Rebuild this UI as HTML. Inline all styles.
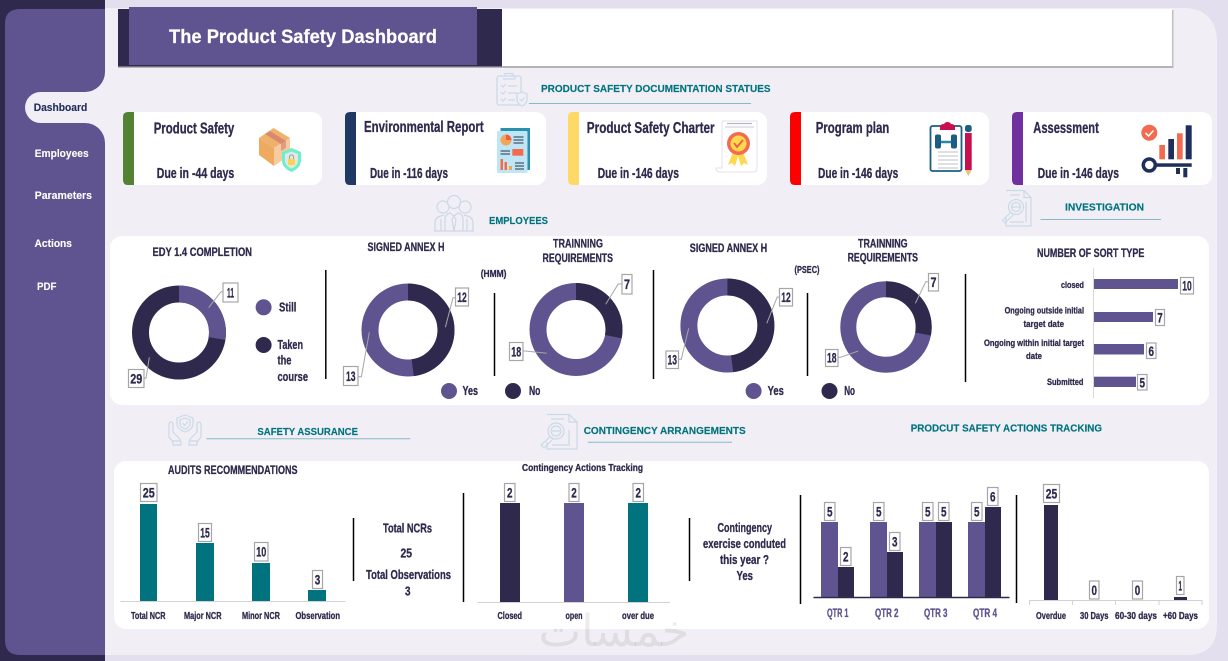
<!DOCTYPE html>
<html lang="en"><head><meta charset="utf-8"><title>The Product Safety Dashboard</title>
<style>
html,body{margin:0;padding:0;background:#e3dfee;width:1228px;height:661px;overflow:hidden}
svg{display:block}
text{font-family:"Liberation Sans",sans-serif;font-weight:700;fill:#2f2a4d;stroke:#2f2a4d;stroke-width:.3px}
.s{fill:#fff;stroke:#fff;stroke-width:.1px;font-size:11px}
.h{fill:#00737f;stroke:#00737f;stroke-width:.15px;font-size:10px}
.c{font-size:15.5px}
.d{font-size:14.5px}
.t{font-size:11.5px}
.l{font-size:10.5px}
.n{font-size:14px;text-anchor:middle}
.m{font-size:12.5px}
.q{font-size:11.5px;fill:#5f5490;stroke:#5f5490}
.o{font-size:9.5px}
.b{fill:#fff;stroke:#a6a6a6;stroke-width:1.200}
.ld{fill:none;stroke:#a6a6a6;stroke-width:1}
.k{stroke:#000;stroke-width:1.5}
.i{fill:none;stroke:#c9dae7;stroke-width:1.200}
.u{stroke:#86bac6;stroke-width:1}
</style></head><body>
<svg width="1228" height="661" viewBox="0 0 1228 661" xmlns="http://www.w3.org/2000/svg">
<rect width="1228" height="661" fill="#e3dfee"/>
<path d="M105 8H1182Q1217 8 1217 43V625Q1217 655 1187 655H105Z" fill="#f1eff5"/>
<rect width="105" height="661" fill="#2f2a4d"/>
<path d="M20 9H105V655H20Q5 655 5 640V24Q5 9 20 9Z" fill="#5f5490"/>
<path d="M105 72A20 20 0 0 1 85 92H40.500A15.500 15.500 0 0 0 40.500 123H85A20 20 0 0 1 105 143Z" fill="#f1eff5"/>
<text class="s" x="33.700" y="111" textLength="53.600" lengthAdjust="spacingAndGlyphs" style="fill:#1f2a5c;stroke:#1f2a5c">Dashboard</text>
<text class="s" x="34.700" y="157" textLength="54" lengthAdjust="spacingAndGlyphs">Employees</text>
<text class="s" x="34.700" y="199" textLength="57.300" lengthAdjust="spacingAndGlyphs">Parameters</text>
<text class="s" x="34.500" y="247" textLength="37.500" lengthAdjust="spacingAndGlyphs">Actions</text>
<text class="s" x="37" y="290" textLength="19.500" lengthAdjust="spacingAndGlyphs">PDF</text>

<!-- header -->
<rect x="118" y="66" width="1055.500" height="2" fill="#b4b4b4"/>
<rect x="1172" y="10" width="1.500" height="57" fill="#c0c0c0"/>
<rect x="118" y="9" width="384" height="57.500" fill="#2f2a4d"/>
<rect x="502" y="9" width="670" height="57" fill="#fff"/>
<rect x="129" y="7" width="348" height="58" fill="#5f5490"/>
<text x="169" y="43" style="fill:#fff;stroke:#fff;stroke-width:.2px;font-size:19px" textLength="268" lengthAdjust="spacingAndGlyphs">The Product Safety Dashboard</text>

<!-- section headings -->
<g class="i"><rect x="497" y="76" width="24" height="29" rx="2"/><path d="M505 76V73.500H513V76M503 79H515V76M501 85l2 2 3-3M508 86H517M501 92l2 2 3-3M508 93H517M501 99l2 2 3-3M508 100H515"/><path d="M522 92l5 2v5q0 5-5 7-5-2-5-7v-5z" fill="#f1eff5"/><path d="M519.500 99l2 2 3-3.500"/></g>
<text class="h" x="541" y="92" textLength="229.600" lengthAdjust="spacingAndGlyphs">PRODUCT SAFETY DOCUMENTATION STATUES</text>
<line class="u" x1="529" y1="103.500" x2="751" y2="103.500"/>

<g class="i"><circle cx="454" cy="202" r="6.500"/><circle cx="443" cy="207" r="6"/><circle cx="465" cy="207" r="6"/><path d="M435 231V223q0-6 6-7l3-1M473 231V223q0-6-6-7l-3-1M445 231V219q0-5 5-6l4 3 4-3q5 1 5 6V231M434 231H474M454 216l-2 4 2 11 2-11zM441 219v12M467 219v12"/></g>
<text class="h" x="489" y="224" textLength="59" lengthAdjust="spacingAndGlyphs">EMPLOYEES</text>

<g class="i"><path d="M1006 190.500H1024L1031 197.500V226H1006V218M1024 190.500V197.500H1031M1010 195H1020M1026 202V222M1010 222H1024"/><circle cx="1016" cy="207" r="7.500"/><circle cx="1016" cy="207" r="4.500"/><path d="M1010.500 212.500L1002.500 220.500 1005 223 1013 215M1012 207H1020"/></g>
<text class="h" x="1065" y="210.300" textLength="79" lengthAdjust="spacingAndGlyphs">INVESTIGATION</text>
<line class="u" x1="1040.500" y1="219.500" x2="1161" y2="219.500"/>

<g class="i"><path d="M185 415l8 3v6q0 5-8 8-8-3-8-8v-6z"/><path d="M185 418l5 2v4q0 3-5 5-5-2-5-5v-4z"/><path d="M182.500 423l2 2.500 3.500-4"/>
<path d="M169 425q0-3 2-3t2 3v7l5 5q3 3 3 6v2h-8v-3l-4-5z"/><path d="M201 425q0-3-2-3t-2 3v7l-5 5q-3 3-3 6v2h8v-3l4-5z"/><path d="M173 441h8M197 441h-8"/></g>
<text class="h" x="257.400" y="435" textLength="100.600" lengthAdjust="spacingAndGlyphs">SAFETY ASSURANCE</text>
<line class="u" x1="206.400" y1="438.700" x2="410.200" y2="438.700"/>

<g class="i"><path d="M547 414.500H569L577 422V449H547V442M569 414.500V422H577M551 419H564M569 430V444M552 445H570"/><circle cx="556" cy="431" r="8"/><circle cx="556" cy="431" r="5"/><path d="M550 437L541 445 544 448 553 439M552 431H560"/></g>
<text class="h" x="583.700" y="434" textLength="162" lengthAdjust="spacingAndGlyphs">CONTINGENCY ARRANGEMENTS</text>
<line class="u" x1="587.800" y1="442.300" x2="732" y2="442.300"/>
<text class="h" x="910.700" y="431.300" textLength="191.300" lengthAdjust="spacingAndGlyphs">PRODCUT SAFETY ACTIONS TRACKING</text>

<!-- cards -->
<g fill="#fff"><rect x="123" y="112" width="199" height="73" rx="10"/><rect x="345" y="112" width="201" height="73" rx="10"/><rect x="568" y="112" width="199" height="73" rx="10"/><rect x="790" y="112" width="199" height="73" rx="10"/><rect x="1012" y="112" width="200" height="73" rx="10"/></g>
<path d="M134 112H128Q123 112 123 117V180Q123 185 128 185H134Z" fill="#548235"/>
<path d="M356 112H350Q345 112 345 117V180Q345 185 350 185H356Z" fill="#1f3864"/>
<path d="M579 112H573Q568 112 568 117V180Q568 185 573 185H579Z" fill="#ffd966"/>
<path d="M801 112H795Q790 112 790 117V180Q790 185 795 185H801Z" fill="#ff0000"/>
<path d="M1023 112H1017Q1012 112 1012 117V180Q1012 185 1017 185H1023Z" fill="#7030a0"/>

<text class="c" x="153.700" y="133.500" textLength="80.600" lengthAdjust="spacingAndGlyphs">Product Safety</text>
<text class="d" x="156.700" y="178" textLength="77.600" lengthAdjust="spacingAndGlyphs">Due in -44 days</text>
<text class="c" x="364" y="132" textLength="119.700" lengthAdjust="spacingAndGlyphs">Environmental Report</text>
<text class="d" x="370" y="178" textLength="78" lengthAdjust="spacingAndGlyphs">Due in -116 days</text>
<text class="c" x="586.800" y="133" textLength="127.800" lengthAdjust="spacingAndGlyphs">Product Safety Charter</text>
<text class="d" x="597.700" y="178" textLength="81.300" lengthAdjust="spacingAndGlyphs">Due in -146 days</text>
<text class="c" x="815.700" y="133" textLength="73.600" lengthAdjust="spacingAndGlyphs">Program plan</text>
<text class="d" x="818" y="178" textLength="80.300" lengthAdjust="spacingAndGlyphs">Due in -146 days</text>
<text class="c" x="1033.300" y="133" textLength="65.500" lengthAdjust="spacingAndGlyphs">Assessment</text>
<text class="d" x="1037.800" y="178" textLength="81.200" lengthAdjust="spacingAndGlyphs">Due in -146 days</text>

<!-- box icon -->
<polygon points="273.500,128 290,138 274,148 259,138" fill="#efb26c"/>
<polygon points="259,138 274,148 274,166 259,155" fill="#eeab60"/>
<polygon points="290,138 274,148 274,166 290,155" fill="#f6cba0"/>
<polygon points="265,134 281,144 286,141 270,131" fill="#d98a6e"/>
<polygon points="281,144 286,141 286,148 281,151" fill="#e39a80"/>
<path d="M291.500 148l9.500 4v8q0 8-9.500 12-9.500-4-9.500-12v-8z" fill="#6fefc8"/>
<path d="M291.500 151.500l6.500 2.500v6q0 6-6.500 8.500-6.500-2.500-6.500-8.500v-6z" fill="#dfe7e8"/>
<rect x="288" y="159" width="7" height="6" fill="#ffd24d"/><path d="M289.500 159v-2q0-2 2-2t2 2v2" fill="none" stroke="#9aa3a8" stroke-width="1"/>
<!-- report icon -->
<rect x="500.500" y="128" width="29.500" height="42" fill="#2b8fb0"/>
<rect x="497" y="131" width="30.500" height="42" rx="1" fill="#bfe6f5"/>
<circle cx="506" cy="140" r="5.500" fill="#f5a55a"/><path d="M506 140V134.500A5.500 5.500 0 0 1 511.500 140Z" fill="#ef5d47"/>
<path d="M513.500 137H523.500M513.500 140H523.500M513.500 143H523.500M500.500 151H510M500.500 154H510M515 163H524M515 166H524M515 169H524" stroke="#47566b" stroke-width="1.200"/>
<rect x="512.300" y="149" width="11" height="6.700" fill="#f26b50"/>
<rect x="500.500" y="159" width="2.500" height="11" fill="#f26b50"/><rect x="504.500" y="162" width="2.500" height="8" fill="#f26b50"/><rect x="509" y="166" width="3" height="4" fill="#f5a55a"/>
<!-- certificate icon -->
<path d="M722 121H757V168Q757 172 753 172H720Q716 172 716 168H722Z" fill="#fff" stroke="#e2e2ee" stroke-width="1"/>
<path d="M727 123.500H752" stroke="#b6b6c4" stroke-width="1.300"/><path d="M725 127H754" stroke="#c9c9d6" stroke-width="1"/>
<path d="M733 152l-5 13 4-2 3 3 3-10 3 10 3-3 4 2-5-13z" fill="#ffd84d"/>
<circle cx="738.500" cy="143.500" r="11.500" fill="#f26b50"/><circle cx="738.500" cy="143.500" r="8" fill="#ffd84d"/>
<path d="M734 143l3 4 6-7" fill="none" stroke="#ef5d47" stroke-width="1.800"/>
<!-- clipboard dumbbell icon -->
<rect x="930.500" y="126" width="31" height="45" rx="2" fill="#fff" stroke="#1b5e80" stroke-width="1.800"/>
<path d="M940 130V126Q941 124 944 124 945 122 947.500 122 950 122 951 124 954 124 955 126V130Z" fill="#c8104e"/>
<path d="M936 142H956" stroke="#2c86a6" stroke-width="2.500"/>
<rect x="935" y="134.500" width="6" height="14" rx="2" fill="#1b5e80"/><rect x="951" y="134.500" width="6" height="14" rx="2" fill="#1b5e80"/>
<path d="M938 152H958M938 156H958M938 160H958M938 164H958M938 168H958" stroke="#c9ced6" stroke-width="1.300"/>
<rect x="965" y="125" width="6.700" height="7" rx="2.500" fill="#1b5e80"/>
<rect x="965" y="133" width="6.700" height="37" fill="#c8104e"/><polygon points="965,170 971.700,170 968.300,176" fill="#e8c080"/>
<!-- key chart icon -->
<circle cx="1149.300" cy="132.700" r="8" fill="#f26b50"/><path d="M1145.500 133l3 3 5-5.500" fill="none" stroke="#fff" stroke-width="1.600"/>
<rect x="1159.300" y="145" width="5.700" height="14.300" fill="#f26b50"/><rect x="1168.300" y="139" width="5.700" height="20.300" fill="#1f2f5c"/>
<rect x="1177" y="133.300" width="5.700" height="26" fill="#f26b50"/><rect x="1185.700" y="125.300" width="6" height="34" fill="#1f2f5c"/>
<circle cx="1149.300" cy="165" r="6" fill="#fff" stroke="#1f2f5c" stroke-width="3.500"/>
<rect x="1156.500" y="163.300" width="35.200" height="3.500" fill="#1f2f5c"/><rect x="1176" y="168" width="4" height="6" fill="#1f2f5c"/><rect x="1183.300" y="168" width="4" height="9.300" fill="#1f2f5c"/>

<!-- middle panel -->
<rect x="110" y="236" width="1099" height="169" rx="12" fill="#fff"/>
<text class="t" x="152.500" y="256" textLength="99.500" lengthAdjust="spacingAndGlyphs">EDY 1.4  COMPLETION</text>
<text class="t" x="367.500" y="251" textLength="77" lengthAdjust="spacingAndGlyphs">SIGNED ANNEX H</text>
<text class="t" x="553" y="247.500" textLength="50" lengthAdjust="spacingAndGlyphs">TRAINNING</text>
<text class="t" x="542.500" y="262" textLength="70.500" lengthAdjust="spacingAndGlyphs">REQUIREMENTS</text>
<text x="480.700" y="277" style="font-size:10px" textLength="25.700" lengthAdjust="spacingAndGlyphs">(HMM)</text>
<text class="t" x="689.800" y="252" textLength="77.400" lengthAdjust="spacingAndGlyphs">SIGNED ANNEX H</text>
<text class="t" x="858" y="247.500" textLength="49.600" lengthAdjust="spacingAndGlyphs">TRAINNING</text>
<text class="t" x="847.600" y="261.500" textLength="70.400" lengthAdjust="spacingAndGlyphs">REQUIREMENTS</text>
<text x="794.500" y="273" style="font-size:10px" textLength="25" lengthAdjust="spacingAndGlyphs">(PSEC)</text>
<text class="t" x="1037" y="257" textLength="107.300" lengthAdjust="spacingAndGlyphs">NUMBER OF SORT TYPE</text>

<g class="k"><line x1="325.800" y1="270" x2="325.800" y2="379"/><line x1="494.500" y1="293" x2="494.500" y2="376"/><line x1="653.500" y1="270" x2="653.500" y2="379"/><line x1="807.500" y1="293" x2="807.500" y2="376"/><line x1="965.500" y1="274" x2="965.500" y2="382"/></g>

<!-- donuts -->
<g fill="none" stroke-width="17">
<circle cx="179" cy="332.500" r="38.500" stroke="#2f2a4d"/>
<circle cx="179" cy="332.500" r="38.500" stroke="#5f5490" pathLength="100" stroke-dasharray="27.500 72.500" transform="rotate(-90 179 332.500)"/>
<circle cx="408" cy="330" r="38" stroke="#5f5490"/>
<circle cx="408" cy="330" r="38" stroke="#2f2a4d" pathLength="100" stroke-dasharray="48 52" transform="rotate(-90 408 330)"/>
<circle cx="576" cy="329.500" r="38" stroke="#5f5490"/>
<circle cx="576" cy="329.500" r="38" stroke="#2f2a4d" pathLength="100" stroke-dasharray="28 72" transform="rotate(-90 576 329.500)"/>
<circle cx="727.400" cy="325.500" r="38.500" stroke="#5f5490"/>
<circle cx="727.400" cy="325.500" r="38.500" stroke="#2f2a4d" pathLength="100" stroke-dasharray="48 52" transform="rotate(-90 727.400 325.500)"/>
<circle cx="886" cy="327" r="37.700" stroke="#5f5490" stroke-width="16"/>
<circle cx="886" cy="327" r="37.700" stroke="#2f2a4d" stroke-width="16" pathLength="100" stroke-dasharray="28 72" transform="rotate(-90 886 327)"/>
</g>
<!-- leaders -->
<g class="ld">
<path d="M208.600 307.700L221 291.700H223"/><path d="M149.300 357.300L146 378.300H144"/>
<path d="M445.400 327.300L453 297.700H455"/><path d="M369.300 332.300L361.400 376.700H358"/>
<path d="M605.700 304.300L618.200 284H622"/><path d="M546.800 353.300L525.400 351H523"/>
<path d="M766.800 323.300L777.200 297H779.400"/><path d="M688.700 328.300L681.300 359.300H678.400"/>
<path d="M915.400 303.300L925.700 281.700H928.300"/><path d="M858.300 351L840.600 357.300H838"/>
</g>
<!-- donut label boxes -->
<rect class="b" x="223" y="283" width="15" height="19"/><text class="n" x="230.500" y="297.500" textLength="7" lengthAdjust="spacingAndGlyphs">11</text>
<rect class="b" x="128.500" y="369.500" width="15.500" height="18"/><text class="n" x="136.200" y="383.500" textLength="12" lengthAdjust="spacingAndGlyphs">29</text>
<rect class="b" x="455.500" y="288" width="13" height="18"/><text class="n" x="462" y="302" textLength="9.500" lengthAdjust="spacingAndGlyphs">12</text>
<rect class="b" x="343.500" y="366.500" width="14.500" height="19"/><text class="n" x="350.700" y="381" textLength="9.500" lengthAdjust="spacingAndGlyphs">13</text>
<rect class="b" x="622" y="274.500" width="10" height="19.500"/><text class="n" x="627" y="289" textLength="6" lengthAdjust="spacingAndGlyphs">7</text>
<rect class="b" x="509.500" y="342.500" width="13.500" height="18"/><text class="n" x="516.200" y="356.500" textLength="10" lengthAdjust="spacingAndGlyphs">18</text>
<rect class="b" x="779.500" y="288.500" width="13" height="17.500"/><text class="n" x="786" y="302" textLength="9.500" lengthAdjust="spacingAndGlyphs">12</text>
<rect class="b" x="666" y="351" width="12.500" height="17.500"/><text class="n" x="672.200" y="364.500" textLength="9.500" lengthAdjust="spacingAndGlyphs">13</text>
<rect class="b" x="928.500" y="273.500" width="10" height="17.500"/><text class="n" x="933.500" y="287" textLength="6" lengthAdjust="spacingAndGlyphs">7</text>
<rect class="b" x="825.500" y="349.500" width="12.500" height="17"/><text class="n" x="831.700" y="362.500" textLength="9.500" lengthAdjust="spacingAndGlyphs">18</text>

<!-- legends -->
<circle cx="263.600" cy="307.300" r="8" fill="#5f5490"/><circle cx="263.600" cy="345" r="8" fill="#2f2a4d"/>
<text class="m" x="279" y="311.500" textLength="17.400" lengthAdjust="spacingAndGlyphs">Still</text>
<text class="m" x="277.500" y="349" textLength="25.500" lengthAdjust="spacingAndGlyphs">Taken</text>
<text class="m" x="277.500" y="364.500" textLength="14" lengthAdjust="spacingAndGlyphs">the</text>
<text class="m" x="277.500" y="381" textLength="30.500" lengthAdjust="spacingAndGlyphs">course</text>
<circle cx="449" cy="391" r="8" fill="#5f5490"/><circle cx="513" cy="391" r="8" fill="#2f2a4d"/>
<text class="m" x="462.500" y="395" textLength="15.500" lengthAdjust="spacingAndGlyphs">Yes</text>
<text class="m" x="529" y="395" textLength="11.400" lengthAdjust="spacingAndGlyphs">No</text>
<circle cx="753.600" cy="391" r="8" fill="#5f5490"/><circle cx="829.500" cy="391" r="8" fill="#2f2a4d"/>
<text class="m" x="767.600" y="395" textLength="16.200" lengthAdjust="spacingAndGlyphs">Yes</text>
<text class="m" x="844.200" y="395" textLength="10.800" lengthAdjust="spacingAndGlyphs">No</text>

<!-- hbar -->
<line x1="1093.500" y1="268" x2="1093.500" y2="398" stroke="#d9d9d9"/>
<g fill="#5f5490"><rect x="1094" y="279" width="84" height="10"/><rect x="1094" y="312" width="59" height="10"/><rect x="1094" y="344" width="50" height="10.500"/><rect x="1094" y="376.700" width="42" height="10.300"/></g>
<rect class="b" x="1180.500" y="277.500" width="13" height="16.500"/><text class="n" x="1187" y="290.500" textLength="9.500" lengthAdjust="spacingAndGlyphs">10</text>
<rect class="b" x="1155.500" y="309.500" width="9" height="16"/><text class="n" x="1160" y="322.500" textLength="5.500" lengthAdjust="spacingAndGlyphs">7</text>
<rect class="b" x="1146.500" y="343" width="9.500" height="15.500"/><text class="n" x="1151.200" y="356" textLength="5.500" lengthAdjust="spacingAndGlyphs">6</text>
<rect class="b" x="1137.500" y="374.500" width="9.500" height="15.500"/><text class="n" x="1142.200" y="387.500" textLength="5.500" lengthAdjust="spacingAndGlyphs">5</text>
<text class="o" x="1061" y="288" textLength="23" lengthAdjust="spacingAndGlyphs">closed</text>
<text class="o" x="1004.600" y="313.700" textLength="79.400" lengthAdjust="spacingAndGlyphs">Ongoing outside initial</text>
<text class="o" x="1023.500" y="327" textLength="40.500" lengthAdjust="spacingAndGlyphs">target date</text>
<text class="o" x="984" y="346" textLength="100" lengthAdjust="spacingAndGlyphs">Ongoing within initial target</text>
<text class="o" x="1026" y="359" textLength="16" lengthAdjust="spacingAndGlyphs">date</text>
<text class="o" x="1047" y="385" textLength="36.500" lengthAdjust="spacingAndGlyphs">Submitted</text>

<!-- bottom panel -->
<rect x="114" y="461" width="1095" height="168" rx="12" fill="#fff"/>
<text class="t" x="168" y="474" textLength="129.500" lengthAdjust="spacingAndGlyphs">AUDITS RECOMMENDATIONS</text>
<text x="522" y="471" style="font-size:10.500px" textLength="121" lengthAdjust="spacingAndGlyphs">Contingency Actions Tracking</text>
<g class="k"><line x1="353.500" y1="518" x2="353.500" y2="581"/><line x1="463.500" y1="493" x2="463.500" y2="602"/><line x1="689.500" y1="518" x2="689.500" y2="581"/><line x1="800.500" y1="495" x2="800.500" y2="604"/><line x1="1016.500" y1="495" x2="1016.500" y2="603"/></g>

<line x1="120.500" y1="601.500" x2="345.500" y2="601.500" stroke="#d2d2d2"/>
<g fill="#00737f"><rect x="140" y="504" width="17" height="97"/><rect x="196" y="543" width="18" height="58"/><rect x="252" y="563" width="18" height="38"/><rect x="308" y="590" width="18" height="11"/></g>
<rect class="b" x="140.500" y="483.500" width="16.500" height="18"/><text class="n" x="148.700" y="497.500" textLength="12" lengthAdjust="spacingAndGlyphs">25</text>
<rect class="b" x="198.500" y="523.500" width="13" height="18"/><text class="n" x="205" y="537.500" textLength="9.500" lengthAdjust="spacingAndGlyphs">15</text>
<rect class="b" x="254.500" y="542.500" width="13.500" height="18.500"/><text class="n" x="261.200" y="556.500" textLength="10" lengthAdjust="spacingAndGlyphs">10</text>
<rect class="b" x="312.500" y="570.500" width="10" height="18"/><text class="n" x="317.500" y="584.500" textLength="5.500" lengthAdjust="spacingAndGlyphs">3</text>
<text class="l" x="131" y="619" textLength="34.500" lengthAdjust="spacingAndGlyphs">Total NCR</text>
<text class="l" x="184" y="619" textLength="37.500" lengthAdjust="spacingAndGlyphs">Major NCR</text>
<text class="l" x="242" y="619" textLength="38" lengthAdjust="spacingAndGlyphs">Minor NCR</text>
<text class="l" x="295.500" y="619" textLength="44.500" lengthAdjust="spacingAndGlyphs">Observation</text>

<text class="m" x="383" y="532.500" textLength="49" lengthAdjust="spacingAndGlyphs">Total NCRs</text>
<text class="m" x="400.500" y="557.500" textLength="11.500" lengthAdjust="spacingAndGlyphs">25</text>
<text class="m" x="366" y="579" textLength="85" lengthAdjust="spacingAndGlyphs">Total Observations</text>
<text class="m" x="405" y="595.500" textLength="5.500" lengthAdjust="spacingAndGlyphs">3</text>

<line x1="477.500" y1="602.500" x2="670" y2="602.500" stroke="#d2d2d2"/>
<rect x="500" y="503" width="20" height="99" fill="#2f2a4d"/><rect x="564" y="503" width="20" height="99" fill="#5f5490"/><rect x="628" y="503" width="20" height="99" fill="#00737f"/>
<rect class="b" x="504.500" y="483.500" width="10.500" height="18"/><text class="n" x="509.700" y="497.500" textLength="5.500" lengthAdjust="spacingAndGlyphs">2</text>
<rect class="b" x="569" y="483.500" width="10" height="18"/><text class="n" x="574" y="497.500" textLength="5.500" lengthAdjust="spacingAndGlyphs">2</text>
<rect class="b" x="633" y="483.500" width="10.500" height="18"/><text class="n" x="638.200" y="497.500" textLength="5.500" lengthAdjust="spacingAndGlyphs">2</text>
<text class="l" x="497.500" y="619" textLength="24.500" lengthAdjust="spacingAndGlyphs">Closed</text>
<text class="l" x="565.500" y="619" textLength="17" lengthAdjust="spacingAndGlyphs">open</text>
<text class="l" x="622" y="619" textLength="32" lengthAdjust="spacingAndGlyphs">over due</text>

<text class="m" x="717.500" y="532" textLength="54.500" lengthAdjust="spacingAndGlyphs">Contingency</text>
<text class="m" x="703" y="548" textLength="83" lengthAdjust="spacingAndGlyphs">exercise conduted</text>
<text class="m" x="720" y="564" textLength="49" lengthAdjust="spacingAndGlyphs">this year ?</text>
<text class="m" x="736.500" y="580" textLength="16.500" lengthAdjust="spacingAndGlyphs">Yes</text>

<!-- QTR -->
<g fill="#5f5490"><rect x="821" y="522" width="17" height="75"/><rect x="870" y="522" width="17" height="75"/><rect x="919" y="522" width="17" height="75"/><rect x="968" y="522" width="17" height="75"/></g>
<g fill="#2f2a4d"><rect x="838" y="567" width="16" height="30"/><rect x="887" y="552" width="16" height="45"/><rect x="936" y="522" width="16" height="75"/><rect x="985" y="507" width="16" height="90"/></g>
<line x1="813.500" y1="597.500" x2="1009.500" y2="597.500" stroke="#2f2a4d" stroke-width="1.500"/>
<rect class="b" x="824.500" y="502.500" width="10.500" height="18"/><text class="n" x="829.700" y="516.500" textLength="5.500" lengthAdjust="spacingAndGlyphs">5</text>
<rect class="b" x="840.500" y="547.500" width="10.500" height="18"/><text class="n" x="845.700" y="561.500" textLength="5.500" lengthAdjust="spacingAndGlyphs">2</text>
<rect class="b" x="873.500" y="502.500" width="10.500" height="18"/><text class="n" x="878.700" y="516.500" textLength="5.500" lengthAdjust="spacingAndGlyphs">5</text>
<rect class="b" x="889.500" y="532.500" width="10.500" height="18"/><text class="n" x="894.700" y="546.500" textLength="5.500" lengthAdjust="spacingAndGlyphs">3</text>
<rect class="b" x="922.500" y="502.500" width="10.500" height="18"/><text class="n" x="927.700" y="516.500" textLength="5.500" lengthAdjust="spacingAndGlyphs">5</text>
<rect class="b" x="938.500" y="502.500" width="10.500" height="18"/><text class="n" x="943.700" y="516.500" textLength="5.500" lengthAdjust="spacingAndGlyphs">5</text>
<rect class="b" x="971.500" y="502.500" width="10.500" height="18"/><text class="n" x="976.700" y="516.500" textLength="5.500" lengthAdjust="spacingAndGlyphs">5</text>
<rect class="b" x="987.500" y="487.500" width="10.500" height="18"/><text class="n" x="992.700" y="501.500" textLength="5.500" lengthAdjust="spacingAndGlyphs">6</text>
<text class="q" x="827" y="617" textLength="21.500" lengthAdjust="spacingAndGlyphs">QTR 1</text>
<text class="q" x="875" y="617" textLength="23.500" lengthAdjust="spacingAndGlyphs">QTR 2</text>
<text class="q" x="924" y="617" textLength="23.500" lengthAdjust="spacingAndGlyphs">QTR 3</text>
<text class="q" x="973" y="617" textLength="24" lengthAdjust="spacingAndGlyphs">QTR 4</text>

<!-- overdue -->
<path d="M1029.500 605V600.500H1202V605M1072.500 600.500V605M1115.500 600.500V605M1159 600.500V605" fill="none" stroke="#d2d2d2"/>
<rect x="1044" y="505" width="14" height="95" fill="#2f2a4d"/><rect x="1174" y="597" width="13" height="3" fill="#2f2a4d"/>
<rect class="b" x="1043.500" y="484.500" width="16" height="18"/><text class="n" x="1051.500" y="498.500" textLength="11.500" lengthAdjust="spacingAndGlyphs">25</text>
<rect class="b" x="1089.500" y="581" width="9.500" height="18"/><text class="n" x="1094.200" y="595" textLength="5.500" lengthAdjust="spacingAndGlyphs">0</text>
<rect class="b" x="1132.500" y="581" width="10" height="18"/><text class="n" x="1137.500" y="595" textLength="5.500" lengthAdjust="spacingAndGlyphs">0</text>
<rect class="b" x="1176.500" y="576.500" width="7.500" height="18"/><text class="n" x="1180.200" y="590.500" textLength="3.500" lengthAdjust="spacingAndGlyphs">1</text>
<text class="l" x="1036" y="619" textLength="30" lengthAdjust="spacingAndGlyphs">Overdue</text>
<text class="l" x="1080" y="619" textLength="28.500" lengthAdjust="spacingAndGlyphs">30 Days</text>
<text class="l" x="1115" y="619" textLength="42" lengthAdjust="spacingAndGlyphs">60-30 days</text>
<text class="l" x="1163" y="619" textLength="35" lengthAdjust="spacingAndGlyphs">+60 Days</text>

<!-- watermark -->
<text transform="translate(614 646) scale(1.030 1)" text-anchor="middle" direction="rtl" style="font-family:'DejaVu Sans',sans-serif;font-weight:400;font-size:44px;fill:#000;fill-opacity:.075;stroke:none">خمسات</text>
</svg>
</body></html>
